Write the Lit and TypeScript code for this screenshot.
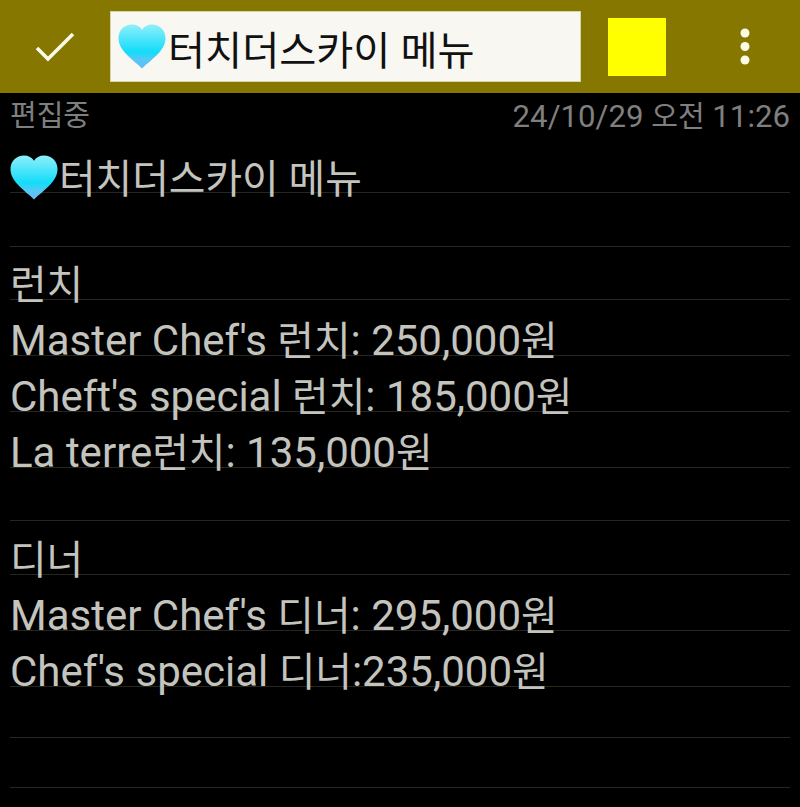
import { LitElement, html, css, svg } from "lit";
import { customElement } from "lit/decorators.js";

const heart = (id: string) => html`<svg class="heart" width="48" height="46" viewBox="0 0 48 48" preserveAspectRatio="none" aria-hidden="true">
  ${svg`<defs><linearGradient id=${id} x1="0" y1="0" x2="0" y2="1">
    <stop offset="0" stop-color="#8ff0f8"/><stop offset="0.22" stop-color="#62e8fb"/>
    <stop offset="0.62" stop-color="#12ddf8"/><stop offset="0.8" stop-color="#55c8f6"/><stop offset="1" stop-color="#6cb8ee"/>
  </linearGradient></defs>
  <path d="M24 46.500C21 43 13 37 7 30 3 25 .5 20.500 .5 14.500 .5 6.500 6.500 .5 14 .5c4.500 0 8 2 10 5.500C26 2.500 29.500 .5 34 .5c7.500 0 13.500 6 13.500 14 0 6-2.500 10.500-6.500 15.500-6 7-14 13-17 16.500Z" fill=${`url(#${id})`}/>`}
</svg>`;

// Hangul runs are set slightly smaller than Latin runs, as in the reference.
const runs = (t: string) =>
  t.split(/([\uAC00-\uD7A3]+(?: [\uAC00-\uD7A3]+)*)/).map((p) =>
    /[\uAC00-\uD7A3]/.test(p) ? html`<span class="ko">${p}</span>` : p
  );

interface Row { text?: string; h: number; heart?: boolean; }
const rows: Row[] = [
  { text: "터치더스카이 메뉴", h: 100, heart: true },
  { h: 54 },
  { text: "런치", h: 53 },
  { text: "Master Chef's 런치: 250,000원", h: 56 },
  { text: "Cheft's special 런치: 185,000원", h: 56 },
  { text: "La terre런치: 135,000원", h: 56 },
  { h: 53 },
  { text: "디너", h: 54 },
  { text: "Master Chef's 디너: 295,000원", h: 56 },
  { text: "Chef's special 디너:235,000원", h: 56 },
  { h: 51 },
  { h: 50 },
];

@customElement("app-root")
export class AppRoot extends LitElement {
  static styles = css`
    :host { display: block; width: 800px; height: 807px; background: #000; overflow: hidden;
      font-family: Roboto, "Noto Sans CJK KR", sans-serif; }
    .bar { height: 93px; background: #857700; display: flex; align-items: center; }
    .check { width: 110px; display: flex; justify-content: center; flex: none; }
    .field { width: 471px; height: 71px; flex: none; box-sizing: border-box; background: #f9f7f2; border: 1px solid #d9d4a8;
      display: flex; align-items: center; padding-left: 7px; font-size: 40.300px; color: #111; white-space: nowrap; }
    .field .label { margin-left: 2px; padding-top: 2px; }
    .swatch { width: 58px; height: 58px; flex: none; margin-left: 27px; background: #ffff00; }
    .more { flex: 1; display: flex; justify-content: center; padding-left: 24px; }
    .status { display: flex; justify-content: space-between; padding: 0 10px; color: #7f7f7f; font-size: 31.200px; line-height: 47px; height: 44px; }
    .status .ko { font-size: 29px; }
    .lines { margin-top: -44px; padding: 0 10px; }
    .row { box-sizing: border-box; border-bottom: 1px solid #26261c; display: flex; align-items: flex-end;
      color: #c4c4bf; font-size: 42px; line-height: 56px; white-space: nowrap; }
    .row .ko { font-size: 39.800px; }
    .row .txt { display: block; margin-bottom: -15px; }
    .row.first .txt { display: flex; align-items: center; margin-bottom: -16px; }
    .row.first .ko { margin-left: 1px; }
    .row.first .heart { margin-bottom: 4px; }
    .heart { flex: none; display: block; }
  `;

  render() {
    return html`
      <div class="bar">
        <div class="check">
          <svg width="40" height="32" viewBox="0 0 40 32"><path d="M2 17 L13 28 L38 3" fill="none" stroke="#fbf9e8" stroke-width="3.600"/></svg>
        </div>
        <div class="field">${heart("h1")}<span class="label">터치더스카이 메뉴</span></div>
        <div class="swatch"></div>
        <div class="more">
          <svg width="10" height="38" viewBox="0 0 10 38"><circle cx="5" cy="5" r="4.500" fill="#fbf9e8"/><circle cx="5" cy="18.500" r="4.500" fill="#fbf9e8"/><circle cx="5" cy="32" r="4.500" fill="#fbf9e8"/></svg>
        </div>
      </div>
      <div class="status"><span class="ko">편집중</span><span>${runs("24/10/29 오전 11:26")}</span></div>
      <div class="lines">
        ${rows.map((r, i) => html`<div class="row ${i === 0 ? "first" : ""}" style="height:${r.h}px">
          ${r.text ? html`<span class="txt">${r.heart ? heart("h2") : ""}${runs(r.text)}</span>` : ""}
        </div>`)}
      </div>
    `;
  }
}
